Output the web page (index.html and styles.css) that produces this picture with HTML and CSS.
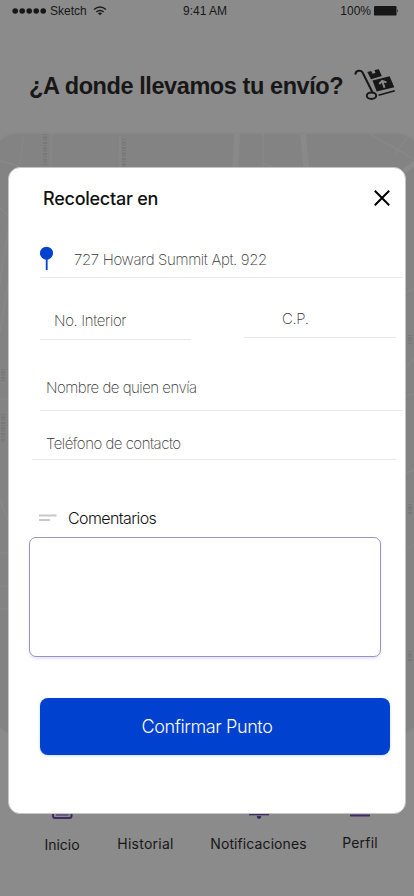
FILE: index.html
```
<!DOCTYPE html>
<html lang="es">
<head>
    <meta charset="UTF-8">
    <meta name="viewport" content="width=device-width, initial-scale=1.0">
    <title>Recolectar en</title>
    <link rel="stylesheet" href="styles.css">
</head>
<body>
    <div class="screen">
        <div class="status-bar">
            <div class="carrier">
                <svg width="35" height="8" viewBox="0 0 35 8">
                    <circle cx="3.2" cy="4" r="2.8"/><circle cx="10.2" cy="4" r="2.8"/><circle cx="17.2" cy="4" r="2.8"/><circle cx="24.2" cy="4" r="2.8"/><circle cx="31.2" cy="4" r="2.8"/>
                </svg>
                <span class="carrier-name">Sketch</span>
                <svg class="wifi" width="14" height="10" viewBox="0 0 14 10">
                    <path d="M1 3.6Q7 -1.7 13 3.6M3.3 6Q7 2.8 10.7 6" fill="none" stroke="#1b1b1b" stroke-width="1.4"/>
                    <path d="M7 9.3L4.9 7.3Q7 5.7 9.1 7.3Z"/>
                </svg>
            </div>
            <span class="time">9:41 AM</span>
            <div class="battery">
                <span class="battery-text">100%</span>
                <svg width="25" height="10" viewBox="0 0 25 10">
                    <rect x="0" y="0" width="22.5" height="9.6" rx="1.2"/>
                    <path d="M23.2 3Q25 4.8 23.2 6.6Z"/>
                </svg>
            </div>
        </div>

        <header class="header">
            <h1>¿A donde llevamos tu envío?</h1>
            <svg class="cart" width="42" height="32" viewBox="0 0 42 32">
                <path d="M1.5 4.8C1.8 1.2 7 .6 8.6 3.5L18.3 23" fill="none" stroke="#171717" stroke-width="2" stroke-linecap="round"/>
                <ellipse cx="17.5" cy="26.7" rx="4.7" ry="3.2" fill="none" stroke="#171717" stroke-width="2"/>
                <path d="M24.5 26.2L40.8 21.8" stroke="#171717" stroke-width="1.6"/>
                <path d="M13.3 3L17.2 2L18.6 4.8L21.4 4.1L20.6 1.1L24.8 0.2L27.8 7L17 10.3Z"/>
                <path d="M18.5 11.5L35.6 7.2L40.3 18.2L22.6 22.6Z"/>
                <path d="M30.5 18.7L28.5 12.8M25.3 15L28.2 12L32.5 13.4" fill="none" stroke="#8b8b8b" stroke-width="2"/>
            </svg>
        </header>

        <div class="map">
            <svg width="430" height="600" viewBox="-8 0 430 600" fill="none">
                <g stroke="#888" stroke-width="1.5">
                    <path d="M-8 24L25 34M23 3L20 30M51 0V34M120 0V34"/>
                    <path d="M263 0V34M262 29L276 35M370 0L414 25M395 20L405 6L414 0"/>
                    <path d="M0 74L9 82M-2 160L9 90M0 198L9 145M0 265H9M0 365L9 389M0 419H9M0 452H9M0 475H9"/>
                    <path d="M405 159L414 155M405 234L414 224M405 262L414 260M405 340L414 336M405 370H414M405 416L414 410"/>
                </g>
                <path d="M237 0L235 40M303 0L307 40" stroke="#898989" stroke-width="6"/>
                <path d="M404 37L420 26" stroke="#8b8b8b" stroke-width="5"/>
                <g stroke="#787878" stroke-width="4" stroke-dasharray="1 1.5 2 1">
                    <path d="M45 0V31M124 5V34M3 235V248M3 280V308M410 201V210M410 370V380M410 517V528"/>
                </g>
            </svg>
        </div>

        <nav class="tab-bar">
            <a class="tab tab-home">
                <svg width="22" height="8" viewBox="0 0 22 8" fill="none" stroke="#3e2b66">
                    <path d="M2 0V5Q2 7 4 7H18.500Q20.500 7 20.500 5V0" stroke-width="2"/>
                    <path d="M5 4H17.500" stroke-width="1"/>
                </svg>
                <span>Inicio</span>
            </a>
            <a class="tab tab-history"><span>Historial</span></a>
            <a class="tab tab-bell">
                <svg width="20" height="8" viewBox="0 0 20 8">
                    <path d="M0 3.600H20" stroke="#3e2b66" stroke-width="1.4"/>
                    <path d="M7.800 5H12.200Q12 8 10 8Q8 8 7.800 5Z" fill="#3e2b66"/>
                </svg>
                <span>Notificaciones</span>
            </a>
            <a class="tab tab-profile">
                <svg width="20" height="8" viewBox="0 0 20 8"><path d="M0 4.500H20" stroke="#3e2b66" stroke-width="2"/></svg>
                <span>Perfil</span>
            </a>
        </nav>

        <form class="modal">
            <div class="modal-header">
                <h2>Recolectar en</h2>
                <svg class="close" width="16" height="16" viewBox="0 0 16 16">
                    <path d="M.8 .8L15.2 15.2M15.2 .8L.8 15.2" stroke="#000" stroke-width="2"/>
                </svg>
            </div>
            <div class="field address">
                <svg width="13" height="24" viewBox="0 0 13 24" fill="#0041d0">
                    <circle cx="6.5" cy="7.2" r="6.5"/>
                    <rect x="5.8" y="12" width="1.8" height="12"/>
                </svg>
                <span class="address-text">727 Howard Summit Apt. 922</span>
            </div>
            <div class="row">
                <div class="field interior"><span>No. Interior</span></div>
                <div class="field zip"><span>C.P.</span></div>
            </div>
            <div class="field sender"><span>Nombre de quien envía</span></div>
            <div class="field phone"><span>Teléfono de contacto</span></div>
            <label class="comments-label" for="comments">
                <svg width="18" height="8" viewBox="0 0 18 8"><path d="M0 1.5H17.5M0 6H11" stroke="#c8c8cc" stroke-width="1.8"/></svg>
                <span>Comentarios</span>
            </label>
            <textarea class="comments" id="comments"></textarea>
            <button class="confirm" type="button"><span>Confirmar Punto</span></button>
        </form>
    </div>
</body>
</html>
```
FILE: styles.css
```
* {
    box-sizing: border-box;
}

body {
    margin: 0;
    font-family: "Liberation Sans", Arial, sans-serif;
    background-color: #8b8b8b;
}

.screen {
    position: relative;
    display: flex;
    flex-direction: column;
    width: 414px;
    height: 896px;
    overflow: hidden;
    color: #171717;
    fill: #171717;
}

svg {
    display: block;
    flex: none;
}

span, h1, h2 {
    white-space: nowrap;
}

/* barra de estado */
.status-bar {
    display: grid;
    grid-template-columns: 1fr auto 1fr;
    align-items: center;
    height: 21px;
    padding: 0 15px 0 12px;
    font-size: 12px;
}

.carrier, .battery {
    display: flex;
    align-items: center;
}

.carrier-name {
    margin: 0 6px 0 3px;
}

.time {
    margin-right: 1px;
}

.battery {
    justify-content: flex-end;
    gap: 3px;
}

.header {
    display: flex;
    height: 113px;
    padding: 48px 0 0 29px;
}

.header h1 {
    width: 325px;
    margin: 0;
    font-size: 23.5px;
    line-height: 34px;
    letter-spacing: -0.42px;
}

/* mapa de fondo */
.map {
    flex: none;
    width: 430px;
    height: 600px;
    margin-left: -8px;
    border-radius: 26px;
    background-color: #838383;
    box-shadow: 0 0 3px #808080;
    overflow: hidden;
}

.tab-bar {
    display: flex;
    align-items: flex-start;
    padding: 77px 36px 0 44px;
    font-family: "Inter", sans-serif;
    font-size: 14px;
    line-height: 18px;
}

.tab {
    display: flex;
    flex-direction: column;
    align-items: center;
    justify-content: space-between;
    height: 43px;
}

.tab-home {
    width: 36px;
}

.tab-history {
    width: 57px;
    height: 42px;
    margin-left: 37px;
    justify-content: flex-end;
    letter-spacing: 0.25px;
}

.tab-bell {
    width: 97px;
    height: 42px;
    margin-left: 36px;
    letter-spacing: 0.1px;
}

.tab-profile {
    width: 36px;
    height: 41px;
    margin-left: 35px;
    letter-spacing: 0.2px;
}

/* ventana */
.modal {
    position: absolute;
    top: 167px;
    left: 8px;
    width: 398px;
    height: 647px;
    border: 1px solid #c4c4c4;
    border-radius: 12px;
    background-color: #fff;
    font-family: "Inter", "Liberation Sans", sans-serif;
    font-weight: 300;
}

.modal-header {
    display: flex;
    align-items: center;
    justify-content: space-between;
    height: 60px;
    padding: 0 15px 0 34px;
}

.modal-header h2 {
    margin: 1px 0 0;
    font-family: "Inter", sans-serif;
    font-size: 18px;
    font-weight: 500;
    letter-spacing: -0.25px;
    color: #111;
}

.field {
    display: flex;
    align-items: flex-end;
    border-bottom: 1px solid #e8e8e8;
    font-size: 15px;
    font-weight: 200;
    line-height: 20px;
    letter-spacing: -0.35px;
    color: #333;
}

.address {
    height: 50px;
    margin: 0 2px 0 31px;
    padding-bottom: 7px;
}

.address-text {
    margin: 0 0 0 21px;
}

.row {
    display: flex;
    justify-content: space-between;
    align-items: flex-start;
    height: 62px;
    margin: 0 9px 0 31px;
}

.interior {
    width: 151px;
    height: 62px;
    padding: 0 0 8px 14px;
}

.zip {
    width: 152px;
    height: 60px;
    padding: 0 0 8px 38px;
}

.sender {
    height: 71px;
    margin: 0 2px 0 31px;
    padding: 0 0 12px 6px;
    letter-spacing: -0.5px;
}

.phone {
    height: 49px;
    margin: 0 9px 0 23px;
    padding: 0 0 5px 14px;
    letter-spacing: -0.5px;
}

.comments-label {
    display: flex;
    align-items: center;
    gap: 11px;
    margin: 48px 0 0 30px;
    font-size: 16px;
    line-height: 20px;
    letter-spacing: -0.6px;
    color: #111;
}

.comments {
    display: block;
    width: 352px;
    height: 120px;
    margin: 9px 0 0 20px;
    border: 1px solid #9a94bd;
    border-radius: 7px;
    background-color: #fff;
    box-shadow: 0 2px 3px #e8e4f6;
    resize: none;
}

.confirm {
    width: 350px;
    height: 57px;
    margin: 41px 0 0 31px;
    padding: 0 16px 0 0;
    border: none;
    border-radius: 8px;
    background-color: #0041d0;
    box-shadow: 0 1px 3px #c5dcf4;
    color: #fff;
    font-family: "Inter", sans-serif;
    font-size: 18px;
    font-weight: 300;
    letter-spacing: -0.4px;
}
```
